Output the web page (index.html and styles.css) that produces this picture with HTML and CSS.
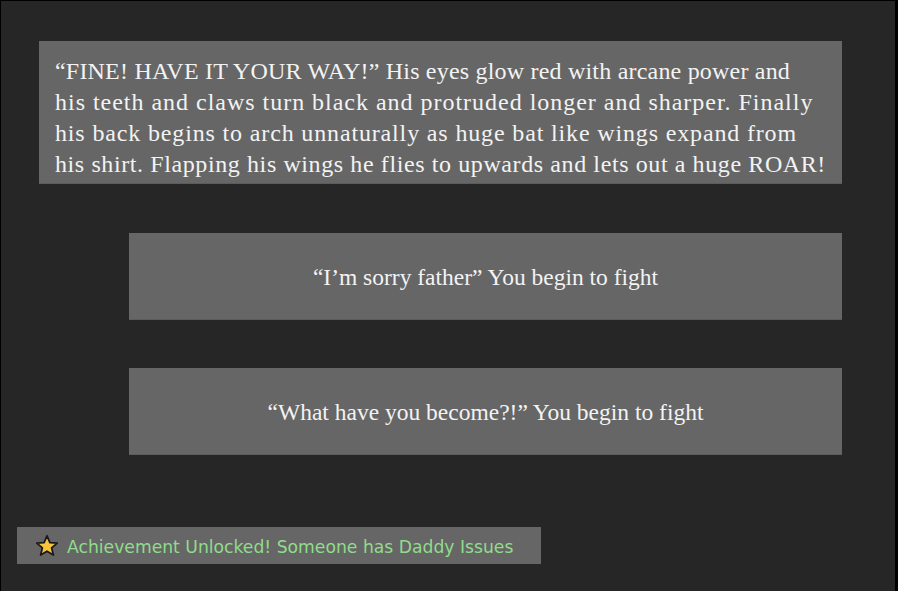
FILE: index.html
```html
<!DOCTYPE html>
<html>
<head>
<meta charset="utf-8">
<link rel="stylesheet" href="styles.css">
</head>
<body>
<div class="frame">
  <div class="story">
    <span class="line l1">“FINE! HAVE IT YOUR WAY!” His eyes glow red with arcane power and</span>
    <span class="line l2">his teeth and claws turn black and protruded longer and sharper. Finally</span>
    <span class="line l3">his back begins to arch unnaturally as huge bat like wings expand from</span>
    <span class="line l4">his shirt. Flapping his wings he flies to upwards and lets out a huge ROAR!</span>
  </div>
  <div class="choice">“I’m sorry father” You begin to fight</div>
  <div class="choice">“What have you become?!” You begin to fight</div>
  <div class="achievement">
    <svg class="star" width="24" height="24" viewBox="0 0 24 24"><path d="M12 1.8 L14.9 8.6 L22.2 9.1 L16.6 13.9 L18.4 21.1 L12 17.2 L5.6 21.1 L7.4 13.9 L1.8 9.1 L9.1 8.6 Z" fill="#f7c43b" stroke="#1a1a1a" stroke-width="1.8" stroke-linejoin="round"/></svg>
    <span class="ach-text">Achievement Unlocked! Someone has Daddy Issues</span>
  </div>
</div>
</body>
</html>
```
FILE: styles.css
```css
html, body {
  margin: 0;
  padding: 0;
  background: #000;
}
.frame {
  box-sizing: border-box;
  width: 898px;
  height: 591px;
  background: #262626;
  border-top: 1px solid #000;
  border-left: 1px solid #000;
  border-right: 3px solid #000;
  padding-top: 40px;
  overflow: hidden;
}
.story {
  margin-left: 38px;
  width: 803px;
  box-sizing: border-box;
  height: 143px;
  background: #666;
  color: #f3f3f3;
  font-family: "Liberation Serif", serif;
  font-size: 24px;
  line-height: 31px;
  padding: 15px 0 0 16px;
  white-space: nowrap;
  border-bottom: 1px solid #5c5c5c;
  display: flex;
  flex-direction: column;
}
.line { display: block; }
.l1 { letter-spacing: 0.2px; }
.l2 { letter-spacing: 0.98px; }
.l3 { letter-spacing: 0.85px; }
.l4 { letter-spacing: 0.6px; }
.choice {
  margin-left: 128px;
  margin-top: 49px;
  width: 713px;
  height: 87px;
  box-sizing: border-box;
  background: #666;
  color: #f3f3f3;
  font-family: "Liberation Serif", serif;
  font-size: 23.5px;
  display: flex;
  align-items: center;
  justify-content: center;
  padding-top: 3px;
  border-bottom: 1px solid #5c5c5c;
}
.choice + .choice {
  margin-top: 48px;
}
.achievement {
  margin-left: 16px;
  margin-top: 72px;
  width: 524px;
  height: 37px;
  box-sizing: border-box;
  background: #666;
  display: flex;
  align-items: center;
  padding-left: 18px;
  gap: 8px;
}
.star {
  display: block;
}
.ach-text {
  color: #90dc8c;
  font-family: "DejaVu Sans", sans-serif;
  font-size: 17.2px;
  padding-top: 2px;
}
```
